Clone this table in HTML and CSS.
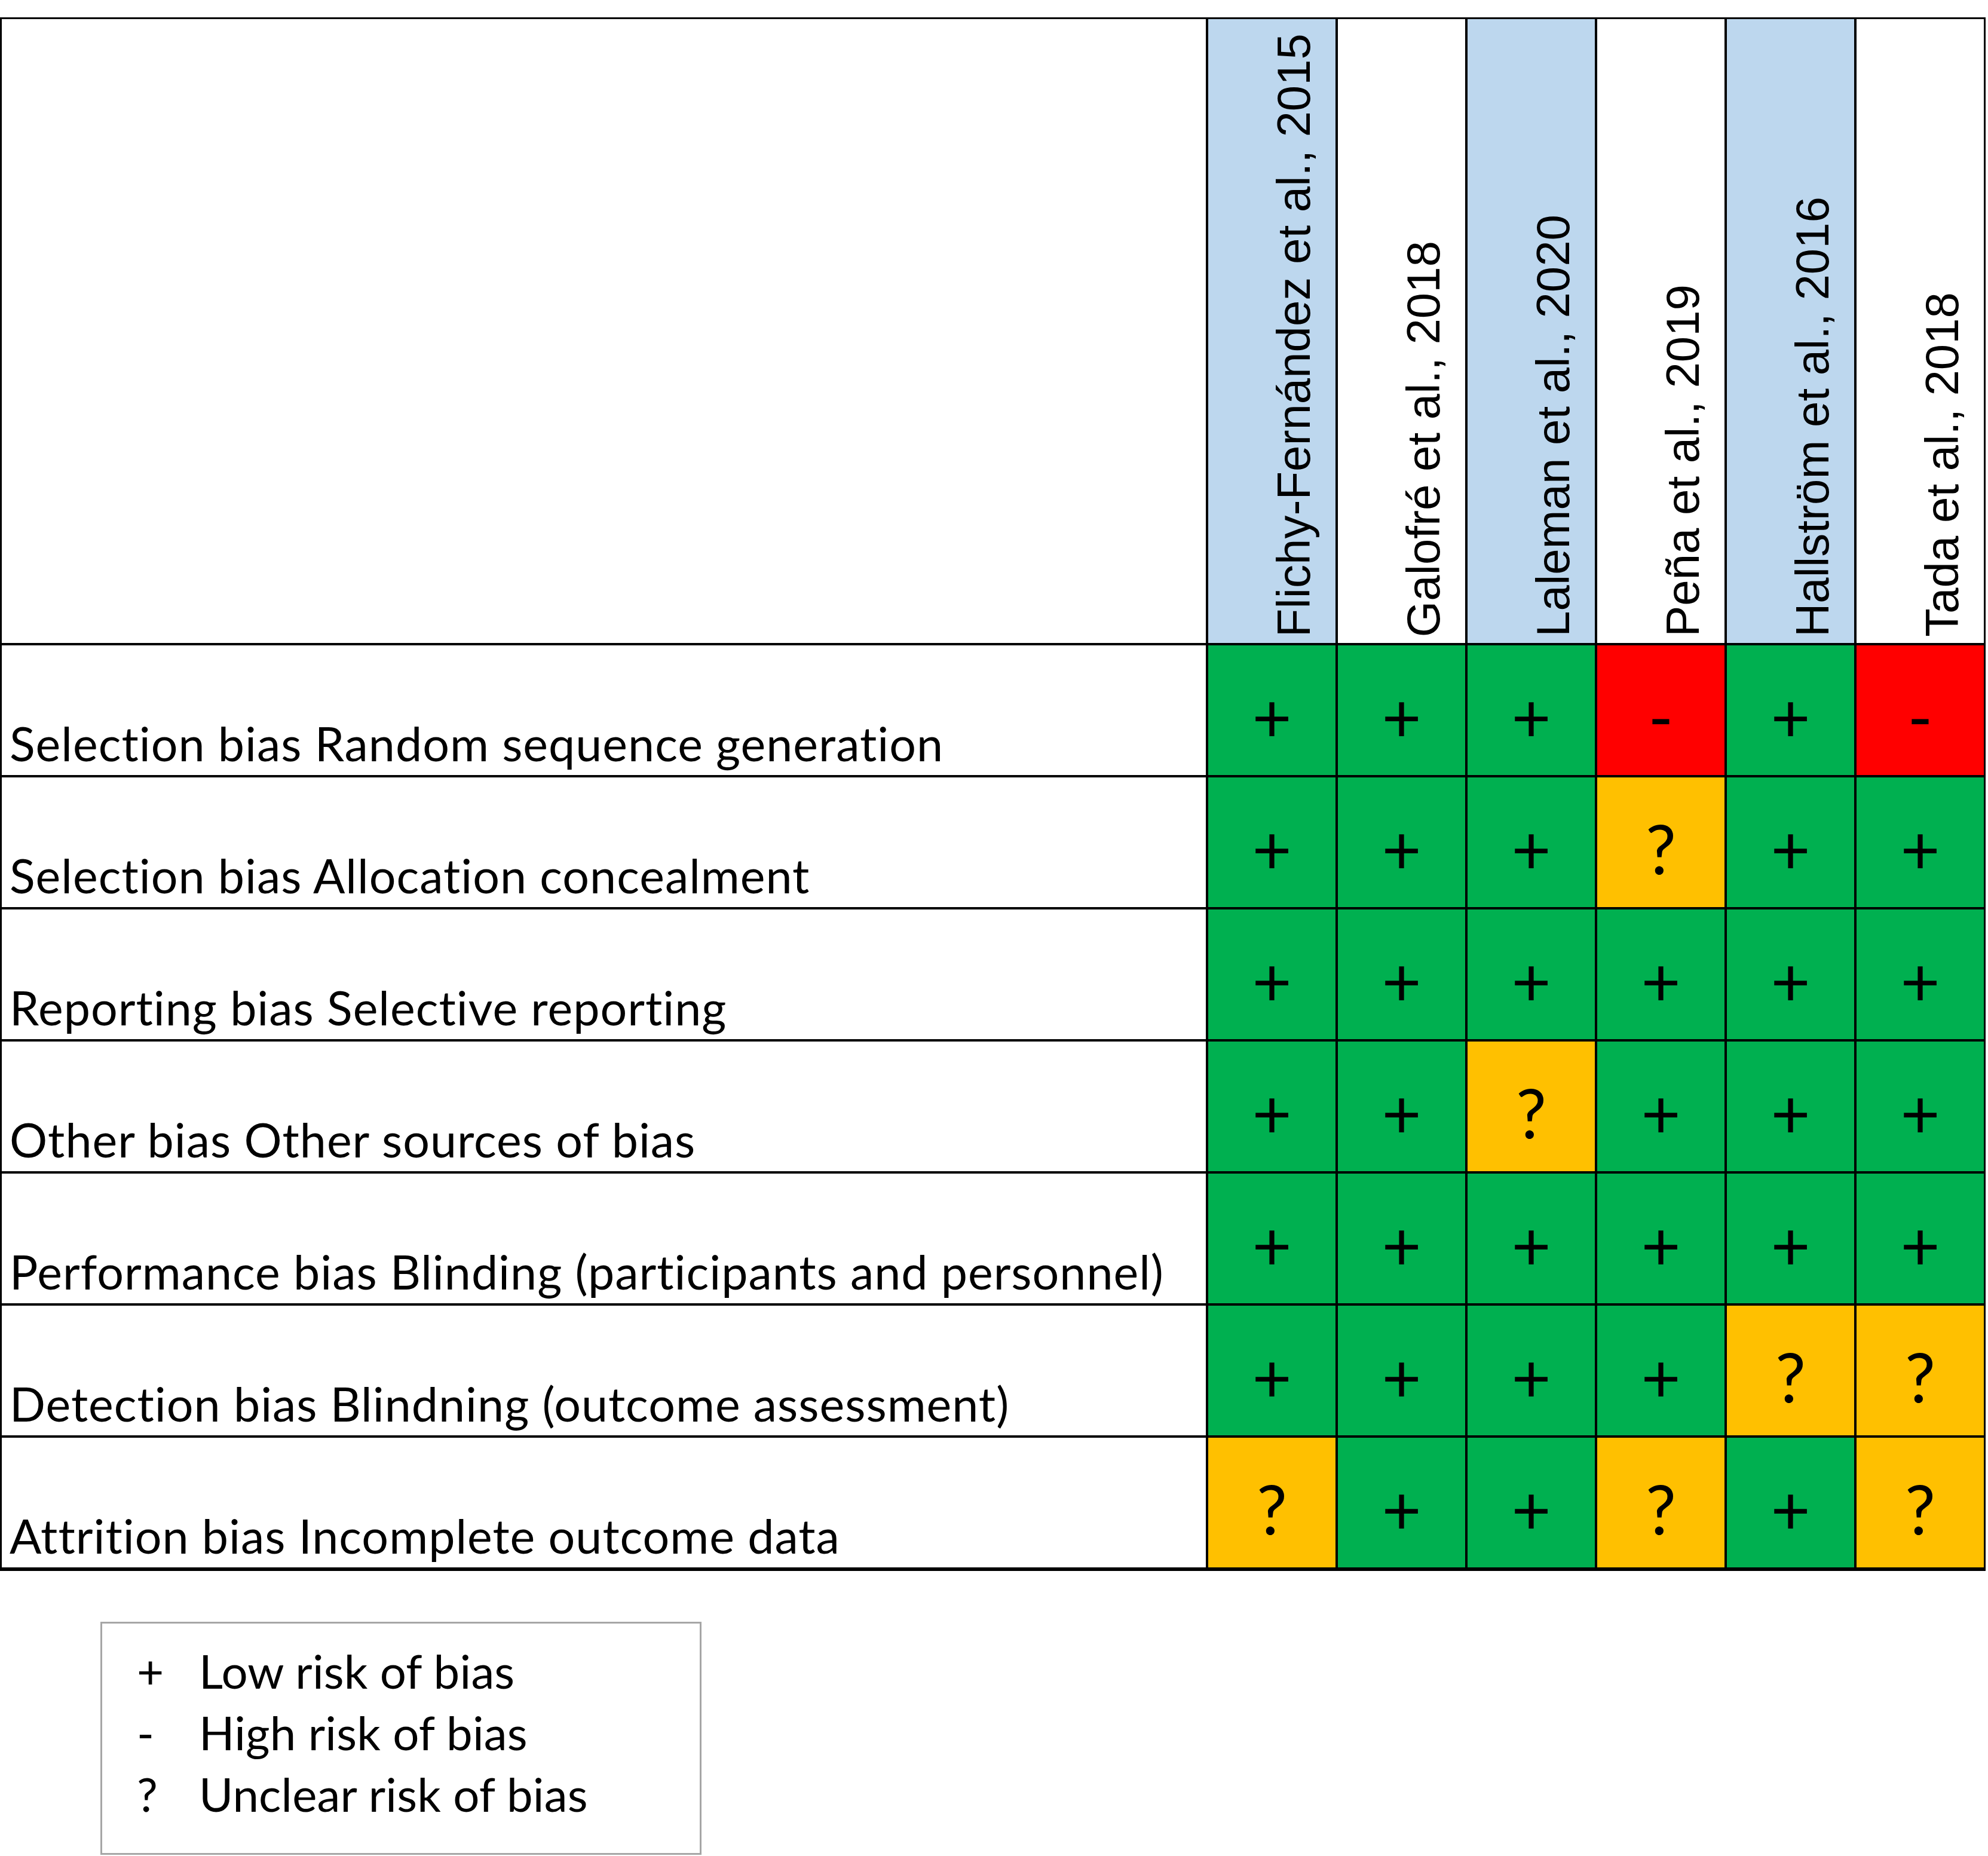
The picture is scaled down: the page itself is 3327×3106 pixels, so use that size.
FILE: index.html
```html
<!DOCTYPE html>
<html lang="en">
<head>
<meta charset="utf-8">
<title>Risk of bias summary</title>
<link rel="stylesheet" href="styles.css">
</head>
<body>
<main class="page">
  <div class="matrix">
    <div class="corner"></div>
    <div class="study blue"><span>Flichy-Fernández et al., 2015</span></div>
    <div class="study"><span>Galofré et al., 2018</span></div>
    <div class="study blue"><span>Laleman et al., 2020</span></div>
    <div class="study"><span>Peña et al., 2019</span></div>
    <div class="study blue"><span>Hallström et al., 2016</span></div>
    <div class="study"><span>Tada et al., 2018</span></div>

    <div class="label">Selection bias Random sequence generation</div>
    <div class="cell low">+</div><div class="cell low">+</div><div class="cell low">+</div><div class="cell high">-</div><div class="cell low">+</div><div class="cell high">-</div>

    <div class="label">Selection bias Allocation concealment</div>
    <div class="cell low">+</div><div class="cell low">+</div><div class="cell low">+</div><div class="cell unclear">?</div><div class="cell low">+</div><div class="cell low">+</div>

    <div class="label">Reporting bias Selective reporting</div>
    <div class="cell low">+</div><div class="cell low">+</div><div class="cell low">+</div><div class="cell low">+</div><div class="cell low">+</div><div class="cell low">+</div>

    <div class="label">Other bias Other sources of bias</div>
    <div class="cell low">+</div><div class="cell low">+</div><div class="cell unclear">?</div><div class="cell low">+</div><div class="cell low">+</div><div class="cell low">+</div>

    <div class="label">Performance bias Blinding (participants and personnel)</div>
    <div class="cell low">+</div><div class="cell low">+</div><div class="cell low">+</div><div class="cell low">+</div><div class="cell low">+</div><div class="cell low">+</div>

    <div class="label">Detection bias Blindning (outcome assessment)</div>
    <div class="cell low">+</div><div class="cell low">+</div><div class="cell low">+</div><div class="cell low">+</div><div class="cell unclear">?</div><div class="cell unclear">?</div>

    <div class="label">Attrition bias Incomplete outcome data</div>
    <div class="cell unclear">?</div><div class="cell low">+</div><div class="cell low">+</div><div class="cell unclear">?</div><div class="cell low">+</div><div class="cell unclear">?</div>
  </div>

  <div class="legend">
    <div class="sym">+</div><div class="desc">Low risk of bias</div>
    <div class="sym">-</div><div class="desc">High risk of bias</div>
    <div class="sym">?</div><div class="desc">Unclear risk of bias</div>
  </div>
</main>
</body>
</html>
```

FILE: styles.css
```css
html, body {
  margin: 0;
  padding: 0;
  background: #ffffff;
}

.page {
  padding-top: 29px;
  color: #000;
}

.matrix {
  display: grid;
  grid-template-columns: 2015px repeat(6, 213px);
  grid-template-rows: 1044px repeat(7, 217px);
  gap: 4px;
  padding: 3px 3px 6px 3px;
  background: #000;
  width: max-content;
}

.corner,
.label,
.study {
  background: #ffffff;
}

.study.blue {
  background: #bdd7ee;
}

.study {
  display: flex;
  justify-content: flex-end;
  align-items: flex-end;
  padding: 0 31px 10px 0;
}

.study span {
  writing-mode: vertical-rl;
  transform: rotate(180deg);
  font-family: "Liberation Sans", Arial, sans-serif;
  font-size: 78px;
  line-height: 1;
  white-space: nowrap;
}

.label {
  display: flex;
  align-items: flex-end;
  padding: 0 0 14px 13px;
  font-family: Lato, "Open Sans", sans-serif;
  font-size: 79px;
  letter-spacing: 1px;
  line-height: 1;
  white-space: nowrap;
}

.cell {
  display: flex;
  justify-content: center;
  align-items: center;
  padding-top: 18px;
  font-family: Lato, "Open Sans", sans-serif;
  font-size: 114px;
  line-height: 1;
}

.low { background: #00b050; }
.high { background: #ff0000; }
.unclear { background: #ffc000; }

.legend {
  margin: 85px 0 0 168px;
  width: 1006px;
  height: 390px;
  box-sizing: border-box;
  border: 3px solid #a6a6a6;
  padding: 28px 0 0 58px;
  display: grid;
  grid-template-columns: 104px auto;
  grid-auto-rows: 103px;
  font-family: Lato, "Open Sans", sans-serif;
  font-size: 78px;
  letter-spacing: 0.2px;
  line-height: 103px;
}
```
